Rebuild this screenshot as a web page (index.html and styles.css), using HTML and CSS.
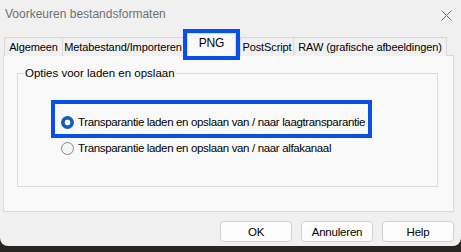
FILE: index.html
```html
<!DOCTYPE html>
<html lang="nl">
<head>
  <meta charset="UTF-8">
  <title>Voorkeuren bestandsformaten</title>
  <link rel="stylesheet" href="styles.css">
</head>
<body>
  <div class="dialog">
    <div class="titlebar">
      <span class="title">Voorkeuren bestandsformaten</span>
      <svg class="close" width="11" height="11" viewBox="0 0 11 11">
        <path d="M0.5 0.5 L10.5 10.5 M10.5 0.5 L0.5 10.5" stroke="#6f6f6f" stroke-width="1" fill="none"/>
      </svg>
    </div>

    <div class="tabs">
      <div class="tab w-alg">Algemeen</div>
      <div class="tab w-meta">Metabestand/Importeren</div>
      <div class="tab active">PNG</div>
      <div class="tab w-ps">PostScript</div>
      <div class="tab w-raw">RAW (grafische afbeeldingen)</div>
    </div>

    <div class="panel">
      <fieldset class="group">
        <legend>Opties voor laden en opslaan</legend>
        <div class="options">
          <div class="opt marked">
            <span class="radio on"></span>
            <span>Transparantie laden en opslaan van / naar laagtransparantie</span>
          </div>
          <div class="opt second">
            <span class="radio"></span>
            <span>Transparantie laden en opslaan van / naar alfakanaal</span>
          </div>
        </div>
      </fieldset>
    </div>

    <div class="buttons">
      <button>OK</button>
      <button>Annuleren</button>
      <button>Help</button>
    </div>
  </div>
</body>
</html>
```

FILE: styles.css
```css
body {
  margin: 0;
  background: #2c2323;
  font-family: "Liberation Sans", Arial, sans-serif;
  font-size: 11px;
  color: #000;
}
.dialog {
  width: 461px;
  height: 246px;
  background: #f0f0f0;
  border-radius: 0 0 8px 8px;
  overflow: hidden;
}
.titlebar {
  height: 28px;
  display: flex;
  align-items: center;
  justify-content: space-between;
  padding: 0 9px 0 5px;
}
.title {
  font-size: 12px;
  color: #707070;
}
.close { margin-top: 2px; }

.tabs {
  display: flex;
  align-items: flex-end;
  height: 23px;
  margin: 5px 0 0 4px;
}
.tab {
  height: 18px;
  line-height: 18px;
  text-align: center;
  border: 1px solid #d9d9d9;
  border-bottom: none;
  border-right: none;
  background: #f0f0f0;
  white-space: nowrap;
  letter-spacing: -0.1px;
}
.w-alg { width: 57px; }
.w-meta { width: 120px; }
.w-ps { width: 52px; }
.w-raw { width: 152px; border-right: 1px solid #d9d9d9; }
.tab.active {
  position: relative;
  z-index: 1;
  width: 49px;
  height: 23px;
  line-height: 19px;
  margin: 0 4px 0 4px;
  background: #f9f9f9;
  border: 1px solid #d9d9d9;
  border-bottom: none;
  box-sizing: border-box;
  outline: 4px solid #0b50e6;
  font-size: 12px;
}

.panel {
  width: 449px;
  height: 155px;
  margin-left: 3px;
  margin-top: -1px;
  background: #f9f9f9;
  border: 1px solid #d9d9d9;
}
.group {
  margin: 11px 0 0 13px;
  width: 421px;
  height: 120px;
  padding: 0;
  border: 1px solid #dcdcdc;
  box-sizing: border-box;
}
.group legend {
  padding: 0 1px;
  margin-left: 6px;
  line-height: 13px;
  font-size: 11.5px;
}
.options {
  padding: 24px 0 0 37px;
}
.opt {
  display: flex;
  align-items: center;
  gap: 4px;
  width: 313px;
  padding-left: 6px;
  font-size: 11.5px;
  letter-spacing: -0.35px;
  line-height: 13px;
  white-space: nowrap;
}
.opt.marked {
  height: 30px;
  padding-top: 7px;
  box-sizing: border-box;
  outline: 4px solid #0b50e6;
}
.opt.second { margin-top: 8px; }
.radio {
  width: 13px;
  height: 13px;
  border-radius: 50%;
  box-sizing: border-box;
  border: 1px solid #8a8a8a;
  background: #f5f5f5;
  flex: none;
}
.radio.on {
  border: none;
  background: radial-gradient(circle, #fff 0 2.6px, #0f5fbd 3.2px);
}

.buttons {
  display: flex;
  justify-content: flex-end;
  gap: 9px;
  margin: 9px 7px 0 0;
}
.buttons button {
  width: 72px;
  height: 21px;
  font-family: "Liberation Sans", Arial, sans-serif;
  font-size: 11.5px;
  letter-spacing: -0.2px;
  color: #000;
  background: #fdfdfd;
  border: 1px solid #d0d0d0;
  border-radius: 4px;
  padding: 0;
}
```
